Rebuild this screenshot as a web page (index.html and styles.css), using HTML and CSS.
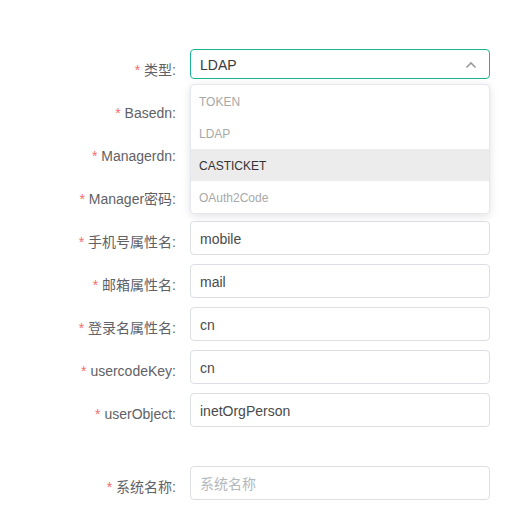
FILE: index.html
```html
<!DOCTYPE html>
<html lang="zh-CN">
<head>
<meta charset="utf-8">
<title>LDAP 配置</title>
<link rel="stylesheet" href="styles.css">
</head>
<body>
<form class="form">
  <div class="row">
    <label class="label"><span class="req">*</span> 类型:</label>
    <div class="select-wrap">
      <div class="select">
        <span class="select-value">LDAP</span>
        <svg class="chevron" width="12" height="8" viewBox="0 0 12 8"><path d="M1.5 6.5 L6 2 L10.5 6.5" fill="none" stroke="#9a9a9a" stroke-width="1.6"/></svg>
      </div>
      <ul class="dropdown">
        <li class="option">TOKEN</li>
        <li class="option">LDAP</li>
        <li class="option option-hover">CASTICKET</li>
        <li class="option">OAuth2Code</li>
      </ul>
    </div>
  </div>
  <div class="row">
    <label class="label"><span class="req">*</span> Basedn:</label>
    <input class="input" value="">
  </div>
  <div class="row">
    <label class="label"><span class="req">*</span> Managerdn:</label>
    <input class="input" value="">
  </div>
  <div class="row">
    <label class="label"><span class="req">*</span> Manager密码:</label>
    <input class="input" value="">
  </div>
  <div class="row">
    <label class="label"><span class="req">*</span> 手机号属性名:</label>
    <input class="input" value="mobile">
  </div>
  <div class="row">
    <label class="label"><span class="req">*</span> 邮箱属性名:</label>
    <input class="input" value="mail">
  </div>
  <div class="row">
    <label class="label"><span class="req">*</span> 登录名属性名:</label>
    <input class="input" value="cn">
  </div>
  <div class="row">
    <label class="label"><span class="req">*</span> usercodeKey:</label>
    <input class="input" value="cn">
  </div>
  <div class="row">
    <label class="label"><span class="req">*</span> userObject:</label>
    <input class="input" value="inetOrgPerson">
  </div>
  <div class="row row-spaced">
    <label class="label"><span class="req">*</span> 系统名称:</label>
    <input class="input" placeholder="系统名称">
  </div>
</form>
</body>
</html>
```
FILE: styles.css
```css
html, body {
  margin: 0;
  padding: 0;
  background: #fff;
}
body {
  font-family: "Liberation Sans", "Noto Sans CJK SC", sans-serif;
  font-size: 14px;
  color: #606266;
}
.form {
  padding-top: 49px;
  width: 490px;
  margin: 0;
}
.row {
  display: grid;
  grid-template-columns: 176px 300px;
  column-gap: 14px;
  align-items: start;
  height: 34px;
  margin-bottom: 9px;
}
.row-spaced {
  margin-top: 39px;
}
.label {
  text-align: right;
  line-height: 34px;
  padding-top: 4px;
  color: #5f6166;
  white-space: nowrap;
}
.req {
  color: #f56c6c;
}
.input {
  box-sizing: border-box;
  height: 34px;
  width: 300px;
  margin: 0;
  padding: 1px 9px 0;
  border: 1px solid #dcdfe6;
  border-radius: 4px;
  font: inherit;
  color: #4a4a4a;
  background: #fff;
  outline: none;
}
.input::placeholder {
  color: #b4b7bd;
}
.select-wrap {
  position: relative;
  width: 300px;
}
.select {
  box-sizing: border-box;
  height: 30px;
  border: 1px solid #1ab394;
  border-radius: 4px;
  display: flex;
  align-items: center;
  justify-content: space-between;
  padding: 1px 12px 0 9px;
  color: #3a3a3a;
}
.chevron {
  display: block;
}
.dropdown {
  position: absolute;
  top: 35px;
  left: 0;
  width: 300px;
  box-sizing: border-box;
  margin: 0;
  padding: 0;
  list-style: none;
  background: #fff;
  border: 1px solid #e4e7ed;
  border-radius: 4px;
  box-shadow: 0 2px 8px rgba(0, 0, 0, 0.12);
  z-index: 10;
  font-size: 12px;
}
.option {
  box-sizing: border-box;
  height: 32px;
  line-height: 30px;
  padding: 2px 0 0 8px;
  color: #a8a8a8;
}
.option-hover {
  background: #ececec;
  color: #333;
}
```
